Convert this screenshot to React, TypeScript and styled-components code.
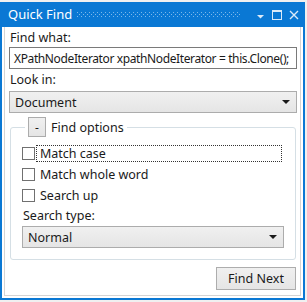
import React from "react";
import styled, { createGlobalStyle } from "styled-components";

const Global = createGlobalStyle`
  html, body {
    margin: 0;
    padding: 0;
    background: #f0f0f0;
  }
  * { box-sizing: border-box; }
`;

const blue = "#0a78d4";
const font = `"Noto Sans", "Open Sans", "Liberation Sans", sans-serif`;

const Frame = styled.div`
  width: 305px;
  height: 298px;
  margin: 2px 2px 0 0;
  border: 2px solid ${blue};
  border-top: none;
  background: #fff;
  display: flex;
  flex-direction: column;
  font-family: ${font};
  font-size: 12.5px;
  color: #1a1a1a;
`;

const TitleBar = styled.div`
  height: 25px;
  background: ${blue};
  display: flex;
  align-items: center;
  padding: 0 6px 0 8px;
  color: #fff;
  font-size: 13px;
  margin: 0 -2px;
`;

const Title = styled.span`
  margin-right: 5px;
  padding-bottom: 1px;
`;

const Grip = styled.svg`
  flex: 1;
  min-width: 0;
  height: 5px;
  margin-right: 8px;
`;

const TitleIcon = styled.svg`
  flex: none;
  margin-left: 7px;
`;

const Body = styled.div`
  flex: 1;
  min-height: 0;
  padding: 0 2px 2px;
  display: flex;
`;

const Panel = styled.div`
  flex: 1;
  min-width: 0;
  border: 1px solid #d4d4d4;
  border-top: none;
  padding: 2px 3px 0 4px;
  display: flex;
  flex-direction: column;
`;

const Label = styled.div<{ $top?: number }>`
  line-height: 16px;
  margin-top: ${(p) => p.$top ?? 0}px;
  padding-left: 1px;
`;

const TextBox = styled.div`
  margin-top: 1px;
  height: 22px;
  border: 1px solid #7a7a7a;
  padding: 0 4px;
  display: flex;
  align-items: center;
  font-size: 12px;
  letter-spacing: -0.38px;
  white-space: nowrap;
  overflow: hidden;
`;

const Combo = styled.div<{ $top?: number }>`
  margin-top: ${(p) => p.$top ?? 3}px;
  height: 22px;
  border: 1px solid #acacac;
  background: linear-gradient(#f0f0f0, #e5e5e5);
  display: flex;
  align-items: center;
  justify-content: space-between;
  padding: 0 6px 0 5px;
  font-size: 12.5px;
`;

const Arrow = styled.span`
  width: 0;
  height: 0;
  border-left: 4px solid transparent;
  border-right: 4px solid transparent;
  border-top: 4px solid #1a1a1a;
`;

const Group = styled.fieldset`
  margin: 4px 1px 0 1px;
  min-width: 0;
  padding: 6px 11px 11px 11px;
  border: 1px solid #d5dfe5;
  border-radius: 3px;
  display: flex;
  flex-direction: column;
`;

const Legend = styled.legend`
  padding: 0 3px;
  margin-left: 3px;
  display: flex;
  align-items: center;
  gap: 5px;
  font-size: 12.5px;
`;

const ToggleButton = styled.span`
  width: 18px;
  height: 20px;
  border: 1px solid #acacac;
  background: linear-gradient(#f0f0f0, #e5e5e5);
  display: flex;
  align-items: center;
  justify-content: center;
  font-size: 12px;
`;

const CheckRow = styled.label`
  display: flex;
  align-items: center;
  height: 21px;
  font-size: 12.5px;
`;

const Box = styled.span`
  width: 13px;
  height: 13px;
  border: 1px solid #707070;
  background: #fff;
  flex: none;
`;

const CheckText = styled.span<{ $focused?: boolean }>`
  margin-left: 1px;
  padding: 0 3px;
  height: 17px;
  line-height: 15px;
  border: 1px ${(p) => (p.$focused ? "dotted #333" : "solid transparent")};
  flex: ${(p) => (p.$focused ? 1 : "none")};
  margin-right: 2px;
`;

const Footer = styled.div`
  margin-top: auto;
  display: flex;
  justify-content: flex-end;
  padding: 0 1px 5px 0;
`;

const Button = styled.span`
  width: 80px;
  height: 23px;
  border: 1px solid #adadad;
  background: linear-gradient(#f0f0f0, #e5e5e5);
  display: flex;
  align-items: center;
  justify-content: center;
  font-size: 12.5px;
`;

const options = [
  { text: "Match case", focused: true },
  { text: "Match whole word" },
  { text: "Search up" },
];

export default function App() {
  return (
    <>
      <Global />
      <Frame>
        <TitleBar>
          <Title>Quick Find</Title>
          <Grip>
            <defs>
              <pattern id="grip" width="4" height="4" patternUnits="userSpaceOnUse">
                <rect x="0" y="0" width="1" height="1" fill="#7db8ea" />
                <rect x="2" y="2" width="1" height="1" fill="#7db8ea" />
              </pattern>
            </defs>
            <rect width="100%" height="5" fill="url(#grip)" />
          </Grip>
          <TitleIcon width="9" height="9" viewBox="0 0 9 9">
            <path d="M1 5h7l-3.5 3.5z" fill="#dbeaf8" />
          </TitleIcon>
          <TitleIcon width="10" height="10" viewBox="0 0 10 10">
            <rect x="0.5" y="0.5" width="9" height="9" fill="none" stroke="#dbeaf8" />
            <rect x="0" y="0" width="10" height="2" fill="#dbeaf8" />
          </TitleIcon>
          <TitleIcon width="10" height="10" viewBox="0 0 10 10">
            <path d="M1 1l8 8M9 1l-8 8" stroke="#dbeaf8" strokeWidth="1.4" />
          </TitleIcon>
        </TitleBar>
        <Body>
          <Panel>
            <Label $top={1}>Find what:</Label>
            <TextBox>XPathNodeIterator xpathNodeIterator = this.Clone();</TextBox>
            <Label $top={3}>Look in:</Label>
            <Combo>
              Document
              <Arrow />
            </Combo>
            <Group>
              <Legend>
                <ToggleButton>-</ToggleButton>
                Find options
              </Legend>
              {options.map((o) => (
                <CheckRow key={o.text}>
                  <Box />
                  <CheckText $focused={o.focused}>{o.text}</CheckText>
                </CheckRow>
              ))}
              <Label $top={2}>Search type:</Label>
              <Combo $top={2}>
                Normal
                <Arrow />
              </Combo>
            </Group>
            <Footer>
              <Button>Find Next</Button>
            </Footer>
          </Panel>
        </Body>
      </Frame>
    </>
  );
}
